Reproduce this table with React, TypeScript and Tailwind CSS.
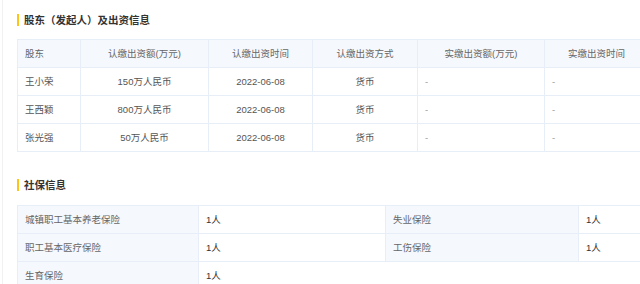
const shareholders = [
  { name: "王小荣", amount: "150万人民币", date: "2022-06-08", method: "货币" },
  { name: "王西颖", amount: "800万人民币", date: "2022-06-08", method: "货币" },
  { name: "张光强", amount: "50万人民币", date: "2022-06-08", method: "货币" },
];

const headers = ["股东", "认缴出资额(万元)", "认缴出资时间", "认缴出资方式", "实缴出资额(万元)", "实缴出资时间"];

function SectionTitle({ children }: { children: string }) {
  return (
    <div className="flex h-[12px] items-center">
      <span className="h-[12px] w-[2px] bg-[#fbc51a]" />
      <span className="ml-[5px] text-[10.5px] font-bold leading-none text-[#333]">{children}</span>
    </div>
  );
}

const cell = "h-[28px] border border-[#e8eef7] px-[7px] text-[9.5px] leading-none";

export default function App() {
  return (
    <div
      className="h-[284px] w-[640px] overflow-hidden bg-white"
      style={{ fontFamily: '"Liberation Sans", "Noto Sans CJK SC", sans-serif' }}
    >
      <div className="ml-[2px] h-full border-l border-[#f1f1f1] pl-[14px] pt-[14px]">
        <SectionTitle>股东（发起人）及出资信息</SectionTitle>

        <table className="mt-[13px] w-[631px] table-fixed border-collapse">
          <colgroup>
            <col className="w-[63px]" />
            <col className="w-[128px]" />
            <col className="w-[104px]" />
            <col className="w-[105px]" />
            <col className="w-[127px]" />
            <col className="w-[104px]" />
          </colgroup>
          <thead>
            <tr className="bg-[#f5f8fd] text-[#666]">
              {headers.map((h, i) => (
                <th key={h} className={`${cell} font-normal ${i === 0 ? "text-left" : "text-center"}`}>
                  {h}
                </th>
              ))}
            </tr>
          </thead>
          <tbody className="text-[#555]">
            {shareholders.map((s) => (
              <tr key={s.name}>
                <td className={`${cell} text-left`}>{s.name}</td>
                <td className={`${cell} text-center`}>{s.amount}</td>
                <td className={`${cell} text-center`}>{s.date}</td>
                <td className={`${cell} text-center`}>{s.method}</td>
                <td className={`${cell} text-left text-[#999]`}>-</td>
                <td className={`${cell} text-left text-[#999]`}>-</td>
              </tr>
            ))}
          </tbody>
        </table>

        <div className="mt-[27px]">
          <SectionTitle>社保信息</SectionTitle>
        </div>

        <table className="mt-[14px] w-[631px] table-fixed border-collapse">
          <colgroup>
            <col className="w-[181px]" />
            <col className="w-[187px]" />
            <col className="w-[193px]" />
            <col className="w-[70px]" />
          </colgroup>
          <tbody>
            <tr>
              <td className={`${cell} bg-[#f5f8fd] text-[#666]`}>城镇职工基本养老保险</td>
              <td className={`${cell} text-[#333]`}>1人</td>
              <td className={`${cell} bg-[#f5f8fd] text-[#666]`}>失业保险</td>
              <td className={`${cell} text-[#333]`}>1人</td>
            </tr>
            <tr>
              <td className={`${cell} bg-[#f5f8fd] text-[#666]`}>职工基本医疗保险</td>
              <td className={`${cell} text-[#333]`}>1人</td>
              <td className={`${cell} bg-[#f5f8fd] text-[#666]`}>工伤保险</td>
              <td className={`${cell} text-[#333]`}>1人</td>
            </tr>
            <tr>
              <td className={`${cell} bg-[#f5f8fd] text-[#666]`}>生育保险</td>
              <td className={`${cell} text-[#333]`} colSpan={3}>
                1人
              </td>
            </tr>
          </tbody>
        </table>
      </div>
    </div>
  );
}
